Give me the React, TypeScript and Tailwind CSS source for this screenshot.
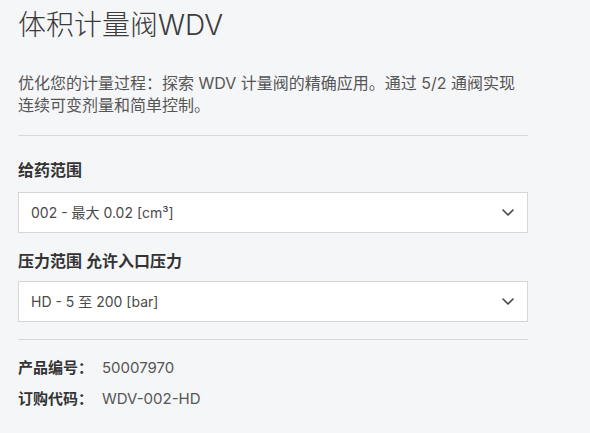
const font = {
  fontFamily: '"Inter", "Noto Sans CJK SC", sans-serif',
};

function Chevron() {
  return (
    <svg width="12" height="7" viewBox="0 0 12 7" fill="none">
      <path
        d="M1 1l5 5 5-5"
        stroke="#444"
        strokeWidth="1.6"
        strokeLinecap="round"
        strokeLinejoin="round"
      />
    </svg>
  );
}

function SelectBox({ value }: { value: string }) {
  return (
    <div className="flex items-center justify-between h-[41px] bg-white border border-[#d6d6d6] pl-3 pr-[13px]">
      <span className="text-[14px] text-[#4a4a4a]">{value}</span>
      <Chevron />
    </div>
  );
}

export default function App() {
  return (
    <div
      className="w-[590px] h-[433px] bg-[#f5f6f8] overflow-hidden"
      style={font}
    >
      <div className="w-[510px] ml-[18px]">
        <h1 className="text-[28px] leading-[36px] pt-[7px] font-light text-[#3b3b3b]">
          体积计量阀WDV
        </h1>
        <p className="mt-[29px] text-[16px] leading-[22px] text-[#555]">
          优化您的计量过程：探索 WDV 计量阀的精确应用。通过 5/2 通阀实现连续可变剂量和简单控制。
        </p>
        <div className="mt-[19px] border-t border-[#d9d9d9]" />

        <h2 className="mt-[23px] text-[16px] leading-[22px] font-semibold text-[#333]">
          给药范围
        </h2>
        <div className="mt-[11px]">
          <SelectBox value="002 - 最大 0.02 [cm³]" />
        </div>

        <h2 className="mt-[17px] text-[16px] leading-[22px] font-semibold text-[#333]">
          压力范围 允许入口压力
        </h2>
        <div className="mt-[9px]">
          <SelectBox value="HD - 5 至 200 [bar]" />
        </div>
        <div className="mt-[17px] border-t border-[#d9d9d9]" />

        <div className="mt-[17px] flex flex-col gap-[9px] text-[15px] leading-[22px]">
          <div className="flex">
            <span className="w-[84px] font-semibold text-[#333]">产品编号：</span>
            <span className="text-[#555]">50007970</span>
          </div>
          <div className="flex">
            <span className="w-[84px] font-semibold text-[#333]">订购代码：</span>
            <span className="text-[#555]">WDV-002-HD</span>
          </div>
        </div>
      </div>
    </div>
  );
}
